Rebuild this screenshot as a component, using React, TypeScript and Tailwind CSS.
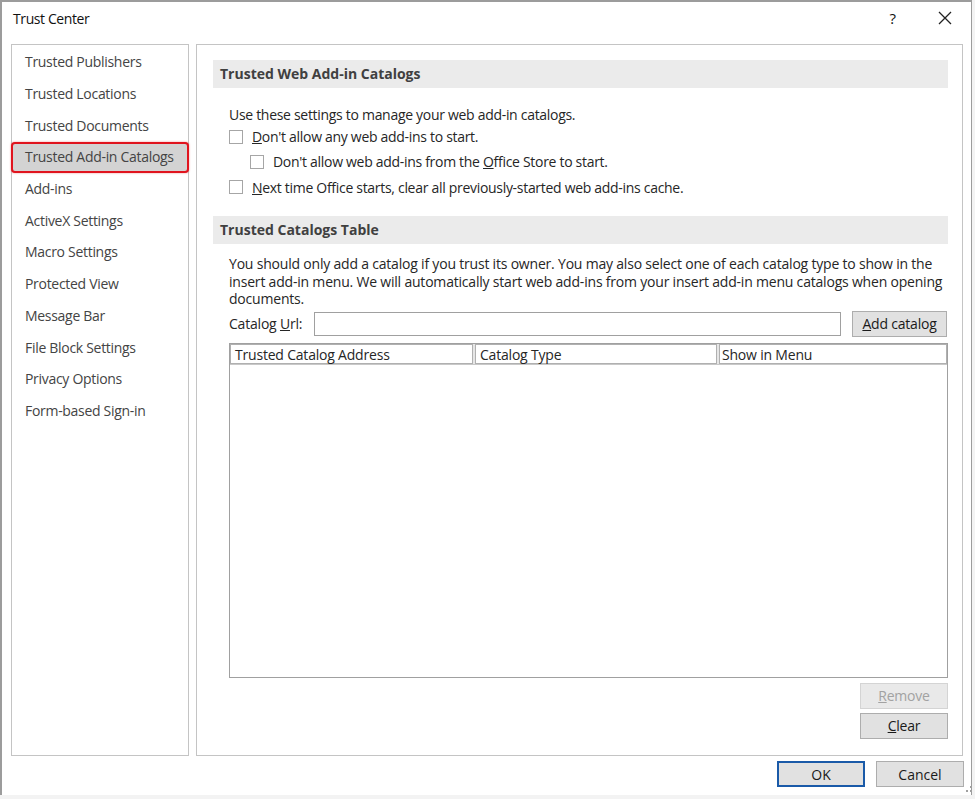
import React from 'react'

const navItems = [
    "Trusted Publishers",
    "Trusted Locations",
    "Trusted Documents",
    "Trusted Add-in Catalogs",
    "Add-ins",
    "ActiveX Settings",
    "Macro Settings",
    "Protected View",
    "Message Bar",
    "File Block Settings",
    "Privacy Options",
    "Form-based Sign-in",
]

function Checkbox() {
    return <span className="inline-block w-[14px] h-[14px] border border-[#a6a6a6] bg-white shrink-0" />
}

function SectionHeader({title}: {title: string}) {
    return (
        <div className="h-[28px] bg-[#ebebeb] flex items-center pl-[7px] pb-[2px] font-bold text-[14px] text-[#404040]">
            {title}
        </div>
    )
}

function Button({children, disabled, primary, className}: {children: React.ReactNode, disabled?: boolean, primary?: boolean, className?: string}) {
    return (
        <div
            className={
                "h-[26px] flex items-center justify-center text-[14px] " +
                (disabled
                    ? "bg-[#e9e9e9] border border-[#d4d4d4] text-[#a2a2a2] "
                    : primary
                        ? "bg-[#e1e1e1] border-2 border-[#1a5aa8] text-[#1a1a1a] "
                        : "bg-[#e1e1e1] border border-[#adadad] text-[#1a1a1a] ") +
                (className ?? "")
            }
        >
            {children}
        </div>
    )
}

export default function App() {
    return (
        <div
            className="relative w-[975px] h-[799px] overflow-hidden bg-[#f3f3f3]"
            style={{fontFamily: '"Open Sans", "Noto Sans", sans-serif'}}
        >
            <div className="w-[972px] h-[795px] bg-white border-t-2 border-l-2 border-r border-[#9c9c9c] flex flex-col">
                {/* title bar */}
                <div className="h-[42px] flex items-start pt-[6px] text-[14px] text-[#111]">
                    <span className="ml-[11px] tracking-[-0.4px]">Trust Center</span>
                    <span className="ml-auto mr-[42px] text-[15px] -mt-[1px]">?</span>
                    <svg width="14" height="14" viewBox="0 0 14 14" className="mr-[19px] mt-[3px]">
                        <path d="M1 1 L13 13 M13 1 L1 13" stroke="#222" strokeWidth="1.3" fill="none" />
                    </svg>
                </div>

                <div className="flex pl-[9px] gap-[7px] h-[712px]">
                    {/* left nav */}
                    <div className="w-[178px] border border-[#c4c4c4] pt-[1px]">
                        {navItems.map((item, i) => (
                            <div key={item} className="relative h-[31.7px] flex items-center">
                                {i === 3 && (
                                    <div className="absolute inset-x-0 top-[1px] bottom-0 bg-[#d3d3d3] border-2 border-[#e0141e] rounded-[4px] -mx-[1px] shadow-[0_0_2px_rgba(224,20,30,0.5)]" />
                                )}
                                <span className="relative pl-[13px] text-[14px] text-[#444] tracking-[-0.3px]">{item}</span>
                            </div>
                        ))}
                    </div>

                    {/* right panel */}
                    <div className="w-[767px] border border-[#c4c4c4] pl-[16px] pr-[14px] pt-[15px] text-[#262626]">
                        <SectionHeader title="Trusted Web Add-in Catalogs" />
                        <div className="pl-[16px] text-[14px] tracking-[-0.3px]">
                            <div className="mt-[16px] h-[20px] flex items-center">Use these settings to manage your web add-in catalogs.</div>
                            <div className="h-[25px] flex items-center gap-[9px]">
                                <Checkbox />
                                <span><u>D</u>on't allow any web add-ins to start.</span>
                            </div>
                            <div className="h-[25px] flex items-center gap-[9px] pl-[21px]">
                                <Checkbox />
                                <span>Don't allow web add-ins from the <u>O</u>ffice Store to start.</span>
                            </div>
                            <div className="h-[26px] flex items-center gap-[9px]">
                                <Checkbox />
                                <span><u>N</u>ext time Office starts, clear all previously-started web add-ins cache.</span>
                            </div>
                        </div>

                        <div className="mt-[16px]">
                            <SectionHeader title="Trusted Catalogs Table" />
                        </div>
                        <div className="pl-[16px] text-[14px] tracking-[-0.2px]">
                            <p className="mt-[11px] leading-[17.5px] pr-[4px]">
                                You should only add a catalog if you trust its owner. You may also select one of each catalog type to show in the insert add-in menu. We will automatically start web add-ins from your insert add-in menu catalogs when opening documents.
                            </p>
                            <div className="mt-[3px] flex items-center h-[26px]">
                                <span className="w-[85px]">Catalog <u>U</u>rl:</span>
                                <div className="w-[527px] h-[24px] border border-[#a0a0a0] bg-white" />
                                <Button className="ml-[11px] w-[95px]"><span><u>A</u>dd catalog</span></Button>
                            </div>
                            <div className="mt-[6px] h-[335px] border border-[#a0a0a0] bg-white">
                                <div className="flex gap-[2px] h-[21px] bg-[#e6e6e6] border-b border-[#c8c8c8]">
                                    <div className="w-[243px] bg-white border border-[#b0b0b0] flex items-center pl-[4px] pt-[2px] leading-none">Trusted Catalog Address</div>
                                    <div className="w-[242px] bg-white border border-[#b0b0b0] flex items-center pl-[4px] pt-[2px] leading-none">Catalog Type</div>
                                    <div className="flex-1 bg-white border border-[#b0b0b0] flex items-center pl-[2px] pt-[2px] leading-none">Show in Menu</div>
                                </div>
                            </div>
                            <div className="flex flex-col items-end gap-[4px] mt-[5px]">
                                <Button disabled className="w-[88px]"><span><u>R</u>emove</span></Button>
                                <Button className="w-[88px]"><span><u>C</u>lear</span></Button>
                            </div>
                        </div>
                    </div>
                </div>

                {/* footer buttons */}
                <div className="flex justify-end gap-[11px] mt-[5px] pr-[7px]">
                    <Button primary className="w-[88px]">OK</Button>
                    <Button className="w-[88px]">Cancel</Button>
                </div>
            </div>
            <div className="absolute right-[3px] bottom-[7px] w-[6px] h-[6px] border-r-2 border-b-2 border-dotted border-[#a0a0a0]" />
        </div>
    )
}
